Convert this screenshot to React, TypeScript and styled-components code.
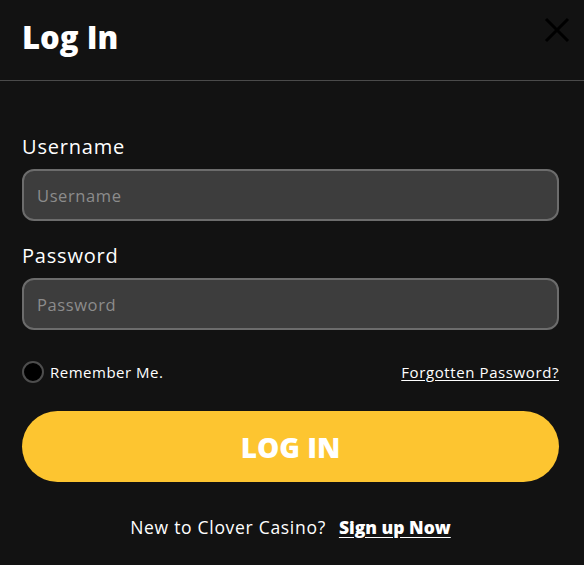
import React from "react";
import styled, { createGlobalStyle } from "styled-components";

const Global = createGlobalStyle`
  html, body { margin: 0; padding: 0; background: #121212; }
  body { font-family: "Open Sans", "Noto Sans", sans-serif; color: #fff; }
  * { box-sizing: border-box; }
`;

const Modal = styled.div`
  width: 584px;
  height: 565px;
  background: #121212;
  display: flex;
  flex-direction: column;
`;

const Header = styled.header`
  height: 81px;
  border-bottom: 1px solid #4a4a4a;
  display: flex;
  align-items: flex-start;
  justify-content: space-between;
  padding: 0 13px 0 22px;
`;

const Title = styled.h1`
  margin: 17px 0 0;
  font-size: 31px;
  line-height: 40px;
  font-weight: 800;
  letter-spacing: 0;
`;

const Close = styled.button`
  margin-top: 16px;
  width: 28px;
  height: 28px;
  padding: 0;
  border: none;
  background: transparent;
  display: flex;
  align-items: center;
  justify-content: center;
`;

const Form = styled.form`
  display: flex;
  flex-direction: column;
  padding: 53px 25px 0 22px;
`;

const Label = styled.label<{ $top?: number }>`
  display: block;
  margin-top: ${(p) => p.$top ?? 0}px;
  font-size: 20px;
  line-height: 26px;
  font-weight: 500;
  letter-spacing: 0.8px;
`;

const Input = styled.input`
  margin-top: 9px;
  height: 52px;
  width: 100%;
  background: #3d3d3d;
  border: 2px solid #6c6c6c;
  border-radius: 12px;
  padding: 0 13px;
  font-family: inherit;
  font-size: 16.5px;
  letter-spacing: 0.6px;
  color: #fff;
  outline: none;
  &::placeholder { color: #8c8c8c; }
`;

const Options = styled.div`
  margin-top: 31px;
  height: 22px;
  display: flex;
  align-items: center;
  justify-content: space-between;
`;

const Remember = styled.label`
  display: flex;
  align-items: center;
  gap: 6px;
  font-size: 15px;
  letter-spacing: 0.5px;
`;

const Radio = styled.span`
  width: 22px;
  height: 22px;
  border-radius: 50%;
  background: #000;
  border: 2px solid #4d4d4d;
`;

const Link = styled.a`
  color: #fff;
  font-size: 15px;
  letter-spacing: 0.6px;
  text-decoration: underline;
  text-underline-offset: 2px;
`;

const Submit = styled.button`
  margin-top: 28px;
  height: 71px;
  width: 100%;
  border: none;
  border-radius: 36px;
  background: #fdc530;
  color: #fff;
  font-family: inherit;
  font-size: 28px;
  font-weight: 800;
  letter-spacing: 0;
`;

const Footer = styled.p`
  margin: 32px 0 0;
  text-align: center;
  font-size: 17.5px;
  line-height: 26px;
  letter-spacing: 0.7px;
`;

const SignUp = styled.a`
  margin-left: 13px;
  color: #fff;
  font-weight: 800;
  letter-spacing: 0;
  text-decoration: underline;
  text-underline-offset: 3px;
`;

export default function App() {
  return (
    <>
      <Global />
      <Modal>
        <Header>
          <Title>Log In</Title>
          <Close aria-label="Close">
            <svg width="26" height="26" viewBox="0 0 26 26">
              <path d="M2 2 L24 24 M24 2 L2 24" stroke="#000" strokeWidth="3" />
            </svg>
          </Close>
        </Header>
        <Form onSubmit={(e) => e.preventDefault()}>
          <Label>Username</Label>
          <Input placeholder="Username" />
          <Label $top={22}>Password</Label>
          <Input type="password" placeholder="Password" />
          <Options>
            <Remember>
              <Radio />
              Remember Me.
            </Remember>
            <Link href="#">Forgotten Password?</Link>
          </Options>
          <Submit type="submit">LOG IN</Submit>
          <Footer>
            New to Clover Casino?
            <SignUp href="#">Sign up Now</SignUp>
          </Footer>
        </Form>
      </Modal>
    </>
  );
}
